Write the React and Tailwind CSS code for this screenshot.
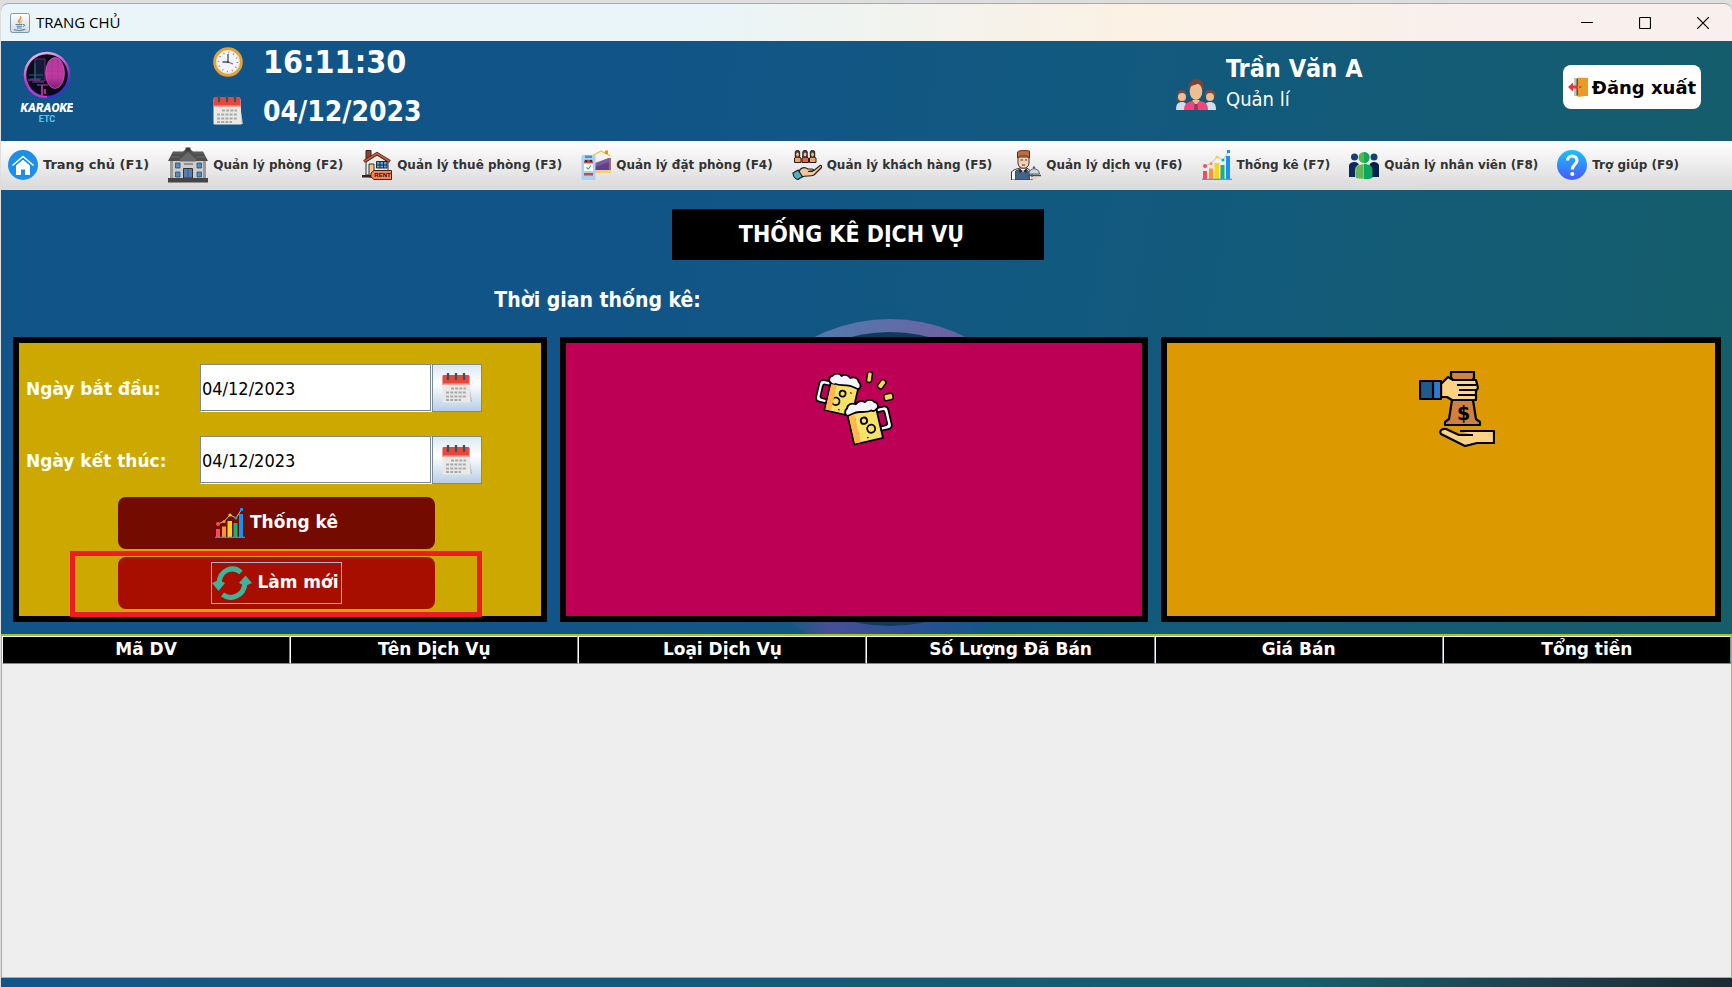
import React from "react";

const cond = "font-['DejaVu_Sans_Condensed','DejaVu_Sans',sans-serif]";
const wide = "font-['DejaVu_Sans',sans-serif]";

function JavaIcon() {
  return (
    <svg width="20" height="20" viewBox="0 0 20 20" fill="none" aria-hidden="true">
      <defs>
        <linearGradient id="java-bg" x1="0" y1="0" x2="0" y2="1">
          <stop offset="0" stopColor="#ffffff" />
          <stop offset="1" stopColor="#cfd9e2" />
        </linearGradient>
      </defs>
      <rect x="0.5" y="0.5" width="19" height="19" rx="2" fill="url(#java-bg)" stroke="#7d97ab" />
      <path d="M9.5 10.5C7 8.5 8.5 7 10 5.800C10.800 5 10.500 4 10.300 3.200C12 5 11 6 10 7.200C9.200 8.200 9.300 9 9.500 10.500Z" fill="#ec8b3b" stroke="#ec8b3b" strokeWidth="0.800" />
      <path d="M11 10.300C10.300 8.800 11 8 12.500 7.200" stroke="#ec8b3b" />
      <path d="M5.500 11.500H12.500M6.500 13.300H12M7 15H11.500M4 16.500C7 17.600 12 17.600 15 16.300" stroke="#5b86a5" strokeWidth="1.100" />
      <path d="M13 11.500C15.500 11 15.300 13.300 12.800 13.700" stroke="#5b86a5" />
    </svg>
  );
}

function KaraokeLogo() {
  return (
    <svg width="54" height="74" viewBox="0 0 54 74" role="img" aria-label="Karaoke ETC">
      <defs>
        <linearGradient id="logo-ring" x1="0.300" y1="0" x2="0.700" y2="1">
          <stop offset="0" stopColor="#e7b9e4" />
          <stop offset="0.450" stopColor="#b344c8" />
          <stop offset="0.850" stopColor="#3530d8" />
        </linearGradient>
        <linearGradient id="logo-mic" x1="0" y1="0" x2="0" y2="1">
          <stop offset="0" stopColor="#b03a9c" />
          <stop offset="0.600" stopColor="#c43ba4" />
          <stop offset="1" stopColor="#7a1d78" />
        </linearGradient>
      </defs>
      <circle cx="28" cy="24" r="22" fill="#0b0a18" stroke="url(#logo-ring)" strokeWidth="2.500" />
      <path d="M7 30C10 42 18 46 28 46" stroke="#c236d6" strokeWidth="2" fill="none" />
      <rect x="16" y="8" width="10" height="22" fill="#111c36" stroke="#8e2a86" strokeWidth="0.800" />
      <path d="M10 24H24M11 28H22M13 31H25M16 12V28" stroke="#1f6478" strokeWidth="1.200" />
      <path d="M9 29H21M18 34H29" stroke="#7f2a8b" strokeWidth="1.500" />
      <ellipse cx="36" cy="22" rx="9.500" ry="15.500" fill="url(#logo-mic)" stroke="#db68c0" strokeWidth="0.600" />
      <path d="M28 20H45M28 25H45M33 8V36M39 8V36" stroke="#a32c8e" strokeWidth="0.500" />
      <path d="M23 34V45M26 38V43" stroke="#b02a94" strokeWidth="2" />
      <text x="28" y="60.500" textAnchor="middle" fontFamily="Roboto, sans-serif" fontWeight="900" fontStyle="italic" fontSize="12" fill="#fff">KARAOKE</text>
      <text x="28" y="71" textAnchor="middle" fontFamily="Roboto, sans-serif" fontWeight="700" fontSize="9" fill="#5cc8e8">ETC</text>
    </svg>
  );
}

function ClockIcon() {
  return (
    <svg width="30" height="30" viewBox="0 0 30 30" fill="none" aria-hidden="true">
      <circle cx="15" cy="15" r="13.300" fill="#eef6fb" stroke="#e5a03a" strokeWidth="3" />
      <circle cx="15" cy="15" r="11.500" stroke="#f6d79c" strokeWidth="0.800" />
      <circle cx="15" cy="15" r="9.500" stroke="#7d8b99" strokeWidth="1.600" strokeDasharray="1 3.974" />
      <path d="M15 7V15H9.500" stroke="#47525e" strokeWidth="1.300" />
      <path d="M15 15L20 17" stroke="#e0443e" strokeWidth="1.200" />
      <circle cx="15" cy="15" r="1.200" fill="#47525e" />
    </svg>
  );
}

function CalendarIcon() {
  return (
    <svg width="30" height="30" viewBox="0 0 30 30" fill="none" aria-hidden="true">
      <path d="M26 4L30 29H25Z" fill="#b9b9b9" />
      <path d="M0.500 4H27.500L28.500 29.500H2C1 29.500 0.500 29 0.500 28Z" fill="#e9e9e8" />
      <path d="M0.500 3C0.500 2.300 1 2 2 2H26C27 2 27.500 2.500 27.500 3.500V12H0.500Z" fill="#e8483c" />
      <path d="M0.500 10.500H27.500V12H0.500Z" fill="#f5a69d" />
      <path d="M6 0.500V6M14 0.500V6M22 0.500V6" stroke="#44505c" strokeWidth="2.400" strokeLinecap="round" />
      <path d="M9 15.500H24M4 19.500H24M4 23.500H24M4 27H19" stroke="#a9a9ab" strokeWidth="2.200" strokeDasharray="3 1.200" />
    </svg>
  );
}

function FamilyIcon() {
  return (
    <svg width="40" height="32" viewBox="0 0 40 32" aria-hidden="true">
      <path d="M0 31C0 25 2 23 6 23S11 25 11 31Z" fill="#d3dceb" />
      <path d="M1 22C0 13 3 11 6 11S11 14 10 22Z" fill="#7b4a3f" />
      <circle cx="6" cy="18" r="4" fill="#edbd94" />
      <path d="M28 31C28 25 30 23 34 23S40 25 40 31Z" fill="#d3dceb" />
      <path d="M29 17C28 11 31 11 34 11S40 12 39 18Z" fill="#7b4a3f" />
      <circle cx="34" cy="18" r="4" fill="#edbd94" />
      <path d="M8 31C8 25 11 23 16 22H24C29 23 32 25 32 31Z" fill="#f4447c" />
      <path d="M16 21L20 26L24 21Z" fill="#edbd94" />
      <path d="M18.500 25H21.500L22 31H18Z" fill="#8c3c5c" />
      <path d="M12.500 11C12 2 17 0 21 0C26 0 28 4 27.500 11Z" fill="#74443d" />
      <ellipse cx="20" cy="12.500" rx="6.300" ry="8.500" fill="#edbd94" />
      <path d="M13 9C14 6 18 7 21 5C24 5 26 6 27 9C28 3 24 0.500 20 0.500S12 3 13 9Z" fill="#74443d" />
    </svg>
  );
}

function DoorIcon() {
  return (
    <svg width="20" height="20" viewBox="0 0 20 20" aria-hidden="true">
      <path d="M6 1H20V19H6Z" fill="#b8c6cd" />
      <path d="M8.500 1.500H18.500V18.500H8.500Z" fill="#6e4c1c" />
      <path d="M10 0.500L20 1V18.500L10 20Z" fill="#eb9a23" />
      <circle cx="12.300" cy="10" r="1.100" fill="#9c5c0c" />
      <path d="M0 10L5 5.500V8.500H10V11.500H5V14.500Z" fill="#e8343f" />
    </svg>
  );
}

function HomeIcon() {
  return (
    <svg width="30" height="30" viewBox="0 0 30 30" fill="none" aria-hidden="true">
      <circle cx="15" cy="15" r="15" fill="#1d8fea" />
      <path d="M8 15.500L15 9.500L22 15.500V25H17V19.500H13V25H8Z" fill="#fff" />
      <path d="M4.500 15.500L15 6.500L25.500 15.500" stroke="#fff" strokeWidth="1.600" />
      <path d="M6.500 16L15 9L23.500 16" stroke="#1d8fea" strokeWidth="1" />
    </svg>
  );
}

function MansionIcon() {
  return (
    <svg width="40" height="36" viewBox="0 0 40 36" aria-hidden="true">
      <path d="M2 14H38V32H2Z" fill="#cdcdcd" />
      <path d="M2 14H5V32H2ZM35 14H38V32H35Z" fill="#9a9a9a" />
      <path d="M0 14L5 4.500H15L20 0.500L25 4.500H35L40 14Z" fill="#4f4f4f" />
      <path d="M12 14.500V12L20 5L28 12V14.500Z" fill="#686868" />
      <path d="M17.500 0.500H22.500V4H17.500Z" fill="#3c3c3c" />
      <path d="M5 6H15M3 10H12M25 6H35M28 10H37" stroke="#666" strokeWidth="1" />
      <path d="M7.500 16H12V21H7.500ZM29 16H33.500V21H29ZM7.500 25H12V30H7.500ZM29 25H33.500V30H29Z" fill="#4d8ecb" stroke="#3f4a55" strokeWidth="0.800" />
      <path d="M15.500 21.500H24.500V31H15.500Z" fill="#4f81b8" stroke="#333" strokeWidth="1" />
      <path d="M20 22V31M16 17H25" stroke="#555" strokeWidth="1" />
      <path d="M0 31H40V35.500H0Z" fill="#454545" />
    </svg>
  );
}

function RentIcon() {
  return (
    <svg width="30" height="30" viewBox="0 0 30 30" fill="none" aria-hidden="true">
      <path d="M4 12L15 5L26 12V25H4Z" fill="#eeeae3" stroke="#333" />
      <path d="M4 0.500H9V8L4 11Z" fill="#8a4332" stroke="#3d2018" />
      <path d="M2 11.500L15 3.500L28 11.500" stroke="#3d2018" strokeWidth="3" />
      <path d="M2.500 11.200L15 3.500L27.500 11.200" stroke="#d05c3c" strokeWidth="1.600" />
      <path d="M7 14H12V27H7Z" fill="#f2c48d" stroke="#333" />
      <path d="M14.500 11.500H25V18H14.500Z" fill="#5aa1df" stroke="#1d2c3c" />
      <path d="M18 11.500V18M21.500 11.500V18M14.500 15H25" stroke="#1d2c3c" />
      <path d="M0 25H9V27.500H0Z" fill="#33211b" />
      <path d="M12 20.500H29.500V29.500H12L9 27V23Z" fill="#f4825e" stroke="#4b251b" />
      <text x="20.500" y="27.300" textAnchor="middle" fontFamily="Liberation Sans, sans-serif" fontWeight="700" fontSize="6" fill="#2c130c">RENT</text>
    </svg>
  );
}

function BookingIcon() {
  return (
    <svg width="30" height="30" viewBox="0 0 30 30" fill="none" aria-hidden="true">
      <path d="M11 6L20 1L29.500 6" stroke="#f2c230" strokeWidth="1.300" />
      <path d="M24 0.500H27V4H24Z" fill="#ee8b2c" />
      <path d="M14 14L28 8V20H14Z" fill="#604088" />
      <path d="M14 13L28 8V12L14 17Z" fill="#7c58a3" />
      <path d="M28 8H30V22H28Z" fill="#9b6f68" />
      <path d="M14 20H30V23H14Z" fill="#efcf86" />
      <rect x="0.500" y="5" width="14" height="25" rx="1.500" fill="#a9d2f3" />
      <path d="M4 5.500H11V8H4Z" fill="#4792d1" />
      <path d="M3 12C3 9 12 9 12 12V13H3Z" fill="#d9403a" />
      <circle cx="5" cy="11" r="1.300" fill="#263549" />
      <circle cx="10" cy="11" r="1.300" fill="#263549" />
      <path d="M3 14H12V21H3Z" fill="#fff" />
      <path d="M5.500 17.500L7.200 19L10 15.500" stroke="#3aa65a" strokeWidth="1.200" />
      <path d="M3 23H12V25.500H3Z" fill="#dc433f" />
    </svg>
  );
}

function CustomerIcon() {
  return (
    <svg width="30" height="30" viewBox="0 0 30 30" fill="none" aria-hidden="true">
      {[2, 9.500, 17].map((x, i) => (
        <g key={x} stroke="#221d1b" strokeWidth="1">
          <path d={`M${x + 0.500} 12.500V8L${x + 2} 7H${x + 5}L${x + 7} 8V12.500Z`} fill={i === 1 ? "#f0623f" : "#eda566"} />
          <path d={`M${x + 1.300} 7V1.500C${x + 2} 0 ${x + 5} 0 ${x + 5.700} 1.500V7Z`} fill="#5c3428" />
          <ellipse cx={x + 3.500} cy="4.500" rx="1.600" ry="2.300" fill="#f3c298" strokeWidth="0.400" />
        </g>
      ))}
      <path d="M8 19.500C11 16.500 14 17.500 16 19H20C22 19 22 21 20 21.500H16L22 20.500L28 15.500C30 15 30 17 29 18L22 25C18 27 14 25 10 27L7 23Z" fill="#f6c6a0" stroke="#221d1b" strokeWidth="1.200" />
      <path d="M1 23L6 20L10.500 26.500L6 29.500C3 29 1 26 1 23Z" fill="#48b3c2" stroke="#221d1b" strokeWidth="1.200" />
    </svg>
  );
}

function WaiterIcon() {
  return (
    <svg width="30" height="30" viewBox="0 0 30 30" fill="none" aria-hidden="true">
      <path d="M0.500 30V22C2 19.500 6 19 9 18H15C18 19 20 21 21 23V30Z" fill="#fff" stroke="#333" />
      <path d="M4.500 30V21L9 19L12 22L15 19L18.500 22V30Z" fill="#43648a" stroke="#26384d" strokeWidth="0.800" />
      <path d="M9.500 19L12 22.500L14.500 19Z" fill="#fff" />
      <path d="M8.500 19L12 21L15.500 19V23L12 21L8.500 23Z" fill="#222" />
      <path d="M7 7H18V13C18 20 7 20 7 13Z" fill="#f2cfb5" stroke="#4a3026" />
      <path d="M6.500 8V2C8 0 16 0.500 18.500 1V8L16 6H9Z" fill="#c36b39" stroke="#5c3020" />
      <path d="M9.500 10H12M14 10H16M11 15H14" stroke="#4a3026" />
      <path d="M18 24C18 17 28 17 28.500 24Z" fill="#cdd8e3" stroke="#59626b" />
      <path d="M16 25.500H30" stroke="#4a4f57" strokeWidth="1.500" />
      <path d="M20 27H26V29H20Z" fill="#f2cfb5" />
      <circle cx="23" cy="17.500" r="1.200" fill="#59626b" />
    </svg>
  );
}

function ChartIcon() {
  return (
    <svg width="30" height="30" viewBox="0 0 30 30" fill="none" aria-hidden="true">
      <path d="M3 16L9 13.500L15 7L21 10L26.500 1.500" stroke="#b9c7d8" strokeWidth="1" />
      <path d="M1 21H5V29H1Z" fill="#f9495f" />
      <path d="M7 18.500H11V29H7Z" fill="#fb9334" />
      <path d="M12.500 13H17V29H12.500Z" fill="#ffd21c" />
      <path d="M18.500 15H22.500V29H18.500Z" fill="#16b573" />
      <path d="M24 6H28V29H24Z" fill="#1492f6" />
      <circle cx="3" cy="16" r="2" fill="#f9495f" />
      <circle cx="9" cy="13.500" r="1.500" fill="#fb9334" />
      <circle cx="15" cy="7" r="1.600" fill="#ffd21c" />
      <circle cx="21" cy="10" r="1.500" fill="#16b573" />
      <rect x="25" y="0" width="3" height="3" fill="#1492f6" />
      <path d="M0 29.300H30" stroke="#2c9cf2" strokeWidth="1.200" />
    </svg>
  );
}

function StaffIcon() {
  return (
    <svg width="30" height="30" viewBox="0 0 30 30" aria-hidden="true">
      <circle cx="5.500" cy="7" r="3.500" fill="#173f79" />
      <circle cx="25" cy="7" r="3.500" fill="#173f79" />
      <path d="M0 27V16C0 13 3 12 5.500 12S10 13 10 16V27Z" fill="#0c2a5c" />
      <path d="M20.500 27V16C20.500 13 23 12 25 12S30 13 30 16V27Z" fill="#08214c" />
      <circle cx="15" cy="7.500" r="5.500" fill="#56b947" />
      <path d="M15 2A5.500 5.500 0 0 1 15 13Z" fill="#0fa85c" />
      <path d="M6.500 28V20C6.500 16 10 14 15 14V29C12 29 9 29 6.500 28Z" fill="#5cb955" stroke="#e9ece9" strokeWidth="0.600" />
      <path d="M23.500 28V20C23.500 16 20 14 15 14V29C18 29 21 29 23.500 28Z" fill="#0ea75f" />
    </svg>
  );
}

function HelpIcon() {
  return (
    <svg width="30" height="30" viewBox="0 0 30 30" fill="none" aria-hidden="true">
      <defs>
        <linearGradient id="help-bg" x1="0" y1="0" x2="0" y2="1">
          <stop offset="0" stopColor="#19c2ff" />
          <stop offset="1" stopColor="#4a58fb" />
        </linearGradient>
      </defs>
      <circle cx="15" cy="15" r="15" fill="url(#help-bg)" />
      <path d="M10.500 10.500C10.500 4.500 20 4.500 20 10.500C20 14.500 15.300 14.500 15.300 19.500" stroke="#fff" strokeWidth="3.200" />
      <circle cx="15.300" cy="24" r="2.100" fill="#fff" />
    </svg>
  );
}

function RefreshIcon() {
  return (
    <svg width="40" height="34" viewBox="0 0 40 34" fill="none" aria-hidden="true">
      <path d="M29 6.500C21 -1 8 4 7 17" stroke="#3cb49d" strokeWidth="5" />
      <path d="M0 17L7 14L13 17L6.500 25Z" fill="#3cb49d" />
      <path d="M10.500 28.500C19 35 32 30 33 17" stroke="#3cb49d" strokeWidth="5" />
      <path d="M27 17L33 20L40 17L33.500 9.500Z" fill="#3cb49d" />
    </svg>
  );
}

function Mug() {
  return (
    <g stroke="#000" strokeWidth="1.700" strokeLinejoin="round">
      <path d="M0 9H-7C-10 9 -11 11 -11 13V27C-11 30 -9 31 -7 31H0V27H-5C-6 27 -7 26 -7 25V15C-7 14 -6 13 -5 13H0Z" fill="#fff" />
      <path d="M0 4H28V38H0Z" fill="#f7e168" />
      <path d="M0 10C-3 9 -3 4 0 3C2 -1 7 -1 9 1C12 -2 16 -1 18 1C22 -2 26 0 27 3C30 4 31 9 28 10C22 9 20 8 16 9C10 10 8 11 5 10C3 12 2 11 0 10Z" fill="#f5f5fb" />
      <circle cx="14" cy="18" r="3" fill="#f7e168" />
      <circle cx="9" cy="27" r="3.800" fill="#f7e168" />
      <path d="M22 15V16M14 34V35M22 28V29" />
    </g>
  );
}

function BeerIcon() {
  return (
    <svg width="80" height="78" viewBox="0 0 80 78" fill="none" role="img" aria-label="Dịch vụ">
      <g transform="translate(19 2) rotate(13)">
        <Mug />
        <path d="M0.900 11H6.500V37.100H0.900Z" fill="#ffb84f" />
      </g>
      <g transform="translate(60 28) rotate(-13) scale(-1 1)">
        <g transform="scale(1.050)"><Mug /></g>
        <path d="M22.500 11.500H28.400V39H22.500Z" fill="#ffb84f" />
      </g>
      <g fill="#f5d94c" stroke="#000" strokeWidth="1.500" strokeLinejoin="round">
        <rect x="53" y="0.800" width="5" height="10.500" rx="2" transform="rotate(8 55 6)" />
        <rect x="65" y="8" width="5.500" height="9.500" rx="2" transform="rotate(36 67 13)" />
        <rect x="70" y="23" width="9" height="6.500" rx="2" transform="rotate(-12 73 26)" />
      </g>
    </svg>
  );
}

function MoneyIcon() {
  return (
    <svg width="76" height="76" viewBox="0 0 76 76" fill="none" role="img" aria-label="Doanh thu">
      <g stroke="#000" strokeWidth="2.200" strokeLinejoin="round">
        <path d="M32 1H55V7L52 11H35L32 6Z" fill="#d0803f" />
        <path d="M33 29H54L57 48L61 51V54H26V51L30 48Z" fill="#d0803f" />
        <path d="M22 13L29 6L34 9H57L59 17L57 20V29H33L28 26H22Z" fill="#ffd385" />
        <path d="M38 14H57M40 19H58M39 24H57" />
        <path d="M22 10H1V28H22Z" fill="#1c5b8c" />
        <path d="M15 11H21V27H15Z" fill="#2e7ad0" stroke="none" />
        <path d="M14 10V28" />
        <path d="M41 60H75V72H58L46 75L22 63C20 60 23 57 27 58L40 64H54" fill="#ffd385" />
      </g>
      <text x="44.500" y="49" textAnchor="middle" fontFamily="DejaVu Sans, sans-serif" fontWeight="700" fontSize="19" fill="#000">$</text>
    </svg>
  );
}

const menu = [
  { label: "Trang chủ (F1)", Icon: HomeIcon, big: true },
  { label: "Quản lý phòng (F2)", Icon: MansionIcon },
  { label: "Quản lý thuê phòng (F3)", Icon: RentIcon },
  { label: "Quản lý đặt phòng (F4)", Icon: BookingIcon },
  { label: "Quản lý khách hàng (F5)", Icon: CustomerIcon },
  { label: "Quản lý dịch vụ (F6)", Icon: WaiterIcon },
  { label: "Thống kê (F7)", Icon: ChartIcon },
  { label: "Quản lý nhân viên (F8)", Icon: StaffIcon },
  { label: "Trợ giúp (F9)", Icon: HelpIcon },
];

const columns = ["Mã DV", "Tên Dịch Vụ", "Loại Dịch Vụ", "Số Lượng Đã Bán", "Giá Bán", "Tổng tiền"];

function TitleBar() {
  return (
    <div className="flex h-[38px] items-center rounded-t-lg border-t border-[#a9a9a9] bg-linear-to-r from-[#e9f5f8] from-40% via-[#fbf1e4] via-65% to-[#f9f0ed] to-85% pl-[9px]">
      <JavaIcon />
      <h1 className="ml-[6px] flex-1 font-['Open_Sans',sans-serif] text-[15px] text-black">TRANG CHỦ</h1>
      <div className="flex text-black">
        <button aria-label="Thu nhỏ" className="flex w-[58px] justify-center">
          <svg width="12" height="12" viewBox="0 0 12 12"><path d="M0 5.500H12" stroke="currentColor" /></svg>
        </button>
        <button aria-label="Phóng to" className="flex w-[58px] justify-center">
          <svg width="12" height="12" viewBox="0 0 12 12"><rect x="0.500" y="0.500" width="11" height="11" rx="1" fill="none" stroke="currentColor" strokeWidth="1.200" /></svg>
        </button>
        <button aria-label="Đóng" className="flex w-[58px] justify-center">
          <svg width="12" height="12" viewBox="0 0 12 12"><path d="M0 0L12 12M12 0L0 12" stroke="currentColor" strokeWidth="1.200" /></svg>
        </button>
      </div>
    </div>
  );
}

function Header() {
  return (
    <header className="flex h-[100px] text-white">
      <div className="w-[212px] pt-[10px] pl-[18px]">
        <KaraokeLogo />
      </div>
      <div className={`flex flex-1 flex-col font-bold ${cond}`}>
        <div className="flex h-[42px] items-center">
          <ClockIcon />
          <time className="ml-5 text-[32px] leading-[42px]">16:11:30</time>
        </div>
        <div className="flex h-[54px] items-center">
          <CalendarIcon />
          <time className="ml-5 pt-1 text-[28px] leading-8">04/12/2023</time>
        </div>
      </div>
      <div className="flex w-[387px] pt-[10px]">
        <div className="pt-7"><FamilyIcon /></div>
        <div className={`ml-[10px] ${cond}`}>
          <p className="text-[25px] leading-9 font-bold">Trần Văn A</p>
          <p className="text-[20px] leading-6">Quản lí</p>
        </div>
      </div>
      <div className="pt-6 pr-[31px]">
        <button className={`flex h-11 w-[138px] items-center justify-center gap-1 rounded-lg bg-white text-[18px] font-bold whitespace-nowrap text-black ${wide}`}>
          <DoorIcon />
          Đăng xuất
        </button>
      </div>
    </header>
  );
}

function Menu() {
  return (
    <nav className="flex h-[49px] items-center gap-[19px] border-b border-[#dcdcdc] bg-linear-to-b from-white to-[#dadada] pl-[7px]">
      {menu.map(({ label, Icon, big }) => (
        <button key={label} className="flex shrink-0 items-center gap-[5px] whitespace-nowrap text-[#333]">
          <Icon />
          <span className={big ? `text-[13px] font-bold ${wide}` : `text-[12px] font-bold ${wide}`}>{label}</span>
        </button>
      ))}
    </nav>
  );
}

function DateField({ id, label }) {
  return (
    <div className="flex h-12 items-center">
      <label htmlFor={id} className={`w-[174px] pt-1 text-[17px] font-bold text-white ${wide}`}>{label}</label>
      <input id={id} defaultValue="04/12/2023" className="h-full min-w-0 flex-1 border border-[#7a8a99] bg-white pl-px text-[18px] text-black shadow-[inset_-1px_-1px_0_#7a8a99] outline-none border-r-white border-b-white" />
      <button aria-label={`Chọn ${label}`} className="flex h-full w-[50px] items-center justify-center border border-[#7a8a99] bg-linear-to-b from-[#dde8f3] via-white via-40% to-[#b8cfe5]">
        <CalendarIcon />
      </button>
    </div>
  );
}

function FilterCard() {
  return (
    <section className={`relative h-[285px] border-6 border-black bg-[#cda900] pt-[21px] pl-[7px] ${cond}`}>
      <form className="flex flex-col" onSubmit={(e) => e.preventDefault()}>
        <div className="flex flex-col gap-6 pr-[59px]">
          <DateField id="start" label="Ngày bắt đầu:" />
          <DateField id="end" label="Ngày kết thúc:" />
        </div>
        <div className={`mt-[13px] mr-[106px] ml-[92px] flex flex-col gap-2 text-[17px] font-bold text-white ${wide}`}>
          <button className="flex h-[52px] items-center justify-center gap-[5px] rounded-lg bg-[#730b00]">
            <ChartIcon />
            Thống kê
          </button>
          <button type="reset" className="flex h-[52px] items-center justify-center rounded-lg bg-[#a80e00]">
            <span className="flex h-[42px] items-center gap-[5px] border border-[#a3b8cc] pr-[2px]">
              <RefreshIcon />
              Làm mới
            </span>
          </button>
        </div>
      </form>
      <div className="pointer-events-none absolute right-[59px] -bottom-px left-[51px] h-[66px] border-5 border-[#ed1c24]" />
    </section>
  );
}

function ServiceTable() {
  return (
    <div className="flex-1 border border-t-2 border-[#9fcb08] bg-[#eee]">
      <table className={`w-full table-fixed border-separate border-spacing-0 bg-black text-[17px] text-white ${wide}`}>
        <thead>
          <tr>
            {columns.map((c) => (
              <th key={c} scope="col" className="h-7 border border-t-white border-r-[#7a8a99] border-b-[#7a8a99] border-l-white p-0 font-bold">{c}</th>
            ))}
          </tr>
        </thead>
      </table>
    </div>
  );
}

function Backdrop() {
  return (
    <svg className="absolute top-[128px] left-1/2 ml-[-146px]" width="338" height="338" viewBox="0 0 338 338" aria-hidden="true">
      <defs>
        <linearGradient id="ring-top" x1="0" y1="0" x2="1" y2="0">
          <stop offset="0.250" stopColor="#4f7cb0" />
          <stop offset="0.700" stopColor="#6c62a0" />
        </linearGradient>
        <linearGradient id="ring-bottom" x1="0" y1="0" x2="1" y2="0">
          <stop offset="0.200" stopColor="#155a7c" />
          <stop offset="0.320" stopColor="#474f96" />
          <stop offset="0.550" stopColor="#2d4f94" />
          <stop offset="0.800" stopColor="#11558a" />
        </linearGradient>
      </defs>
      <path d="M1 169A168 168 0 0 1 337 169Z" fill="url(#ring-top)" />
      <path d="M1 169A168 168 0 0 0 337 169Z" fill="url(#ring-bottom)" />
      <ellipse cx="169" cy="161" rx="150" ry="147" fill="#103a5c" />
    </svg>
  );
}

export default function App() {
  return (
    <div className="flex min-h-screen flex-col bg-[#dedede] pt-[3px] pl-px">
      <TitleBar />
      <div className="flex flex-1 flex-col bg-linear-[100deg] from-[#115588] from-35% via-[#125a7c] via-65% to-[#155e68]">
        <Header />
        <Menu />
        <main className="relative flex flex-1 flex-col pt-[19px]">
          <Backdrop />
          <h2 className={`relative mr-[18px] flex h-[51px] w-[372px] items-center justify-center self-center bg-black pr-3 text-[23px] font-bold text-white ${cond}`}>THỐNG KÊ DỊCH VỤ</h2>
          <p className={`relative mt-[26px] ml-[28.5%] text-[21px] leading-7 font-bold text-white ${cond}`}>Thời gian thống kê:</p>
          <div className="relative mt-[23px] grid grid-cols-[534fr_588fr_560fr] gap-[13px] pr-[11px] pl-3">
            <FilterCard />
            <section className="flex justify-center border-6 border-black bg-[#bd0056] pt-7">
              <BeerIcon />
            </section>
            <section className="flex justify-center border-6 border-black bg-[#dd9a00] pt-7 pl-8">
              <MoneyIcon />
            </section>
          </div>
          <div className="relative mt-3 flex flex-1 flex-col">
            <ServiceTable />
          </div>
        </main>
        <footer className="h-[9px] bg-linear-to-r from-[#125688] via-[#155e6c] via-75% to-[#1c2a33]" />
      </div>
    </div>
  );
}
